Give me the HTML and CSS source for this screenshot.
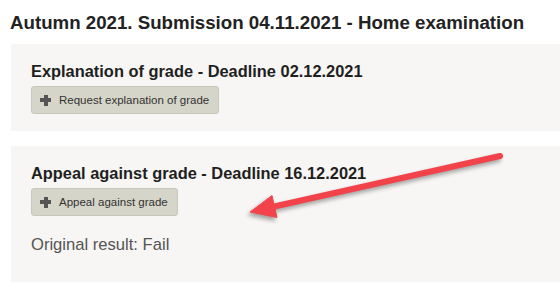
FILE: index.html
```html
<!DOCTYPE html>
<html>
<head>
<meta charset="utf-8">
<link rel="stylesheet" href="styles.css">
</head>
<body>
<div class="page">
  <h1 class="title">Autumn 2021. Submission 04.11.2021 - Home examination</h1>
  <section class="box">
    <h2 class="box-head">Explanation of grade - Deadline 02.12.2021</h2>
    <button class="btn"><span class="plus"></span>Request explanation of grade</button>
  </section>
  <section class="box box-appeal">
    <h2 class="box-head">Appeal against grade - Deadline 16.12.2021</h2>
    <button class="btn"><span class="plus"></span>Appeal against grade</button>
    <p class="result">Original result: Fail</p>
  </section>
  <svg class="arrow" width="560" height="286" viewBox="0 0 560 286">
    <g class="arrow-g">
      <line x1="500" y1="156" x2="272" y2="207" stroke="#f2434b" stroke-width="6" stroke-linecap="round"/>
      <polygon points="250,212 272,195.5 277,217.5" fill="#f2434b" stroke="#f2434b" stroke-width="1" stroke-linejoin="round"/>
    </g>
  </svg>
</div>
</body>
</html>
```

FILE: styles.css
```css
html, body {
  margin: 0;
  padding: 0;
  background: #ffffff;
  overflow: hidden;
}
body {
  font-family: "Liberation Sans", Arial, sans-serif;
  color: #222222;
}
.page {
  position: relative;
  width: 560px;
  height: 286px;
  overflow: hidden;
  padding-top: 12px;
  box-sizing: border-box;
}
.title {
  margin: 0 0 10px 10px;
  font-size: 18.7px;
  line-height: 22px;
  font-weight: bold;
  color: #222222;
  white-space: nowrap;
}
.box {
  margin-left: 11px;
  width: 600px;
  background: #f7f6f4;
  padding: 17px 20px 17px;
  box-sizing: border-box;
  display: flex;
  flex-direction: column;
  align-items: flex-start;
}
.box-appeal {
  margin-top: 15px;
  padding-bottom: 17px;
}
.box-head {
  margin: 0 0 5px 0;
  font-size: 16.4px;
  line-height: 20px;
  font-weight: bold;
  color: #1f1f1f;
  white-space: nowrap;
}
.btn {
  display: flex;
  align-items: center;
  gap: 8px;
  height: 28px;
  padding: 0 9px 0 8px;
  box-sizing: border-box;
  background: #d6d5c9;
  border: 1px solid #c8c7bb;
  border-radius: 3px;
  font-family: "Liberation Sans", Arial, sans-serif;
  font-size: 11.5px;
  color: #333333;
  cursor: pointer;
}
.plus {
  position: relative;
  width: 11px;
  height: 11px;
  display: inline-block;
}
.plus::before,
.plus::after {
  content: "";
  position: absolute;
  background: #555555;
}
.plus::before {
  left: 0;
  top: 3.5px;
  width: 11px;
  height: 4px;
}
.plus::after {
  left: 3.5px;
  top: 0;
  width: 4px;
  height: 11px;
}
.result {
  margin: 19px 0 10px 0;
  font-size: 16.6px;
  line-height: 20px;
  color: #555555;
}
.arrow {
  position: absolute;
  left: 0;
  top: 0;
  pointer-events: none;
}
.arrow-g {
  filter: drop-shadow(-2px 3px 2px rgba(0, 0, 0, 0.35));
}
```
